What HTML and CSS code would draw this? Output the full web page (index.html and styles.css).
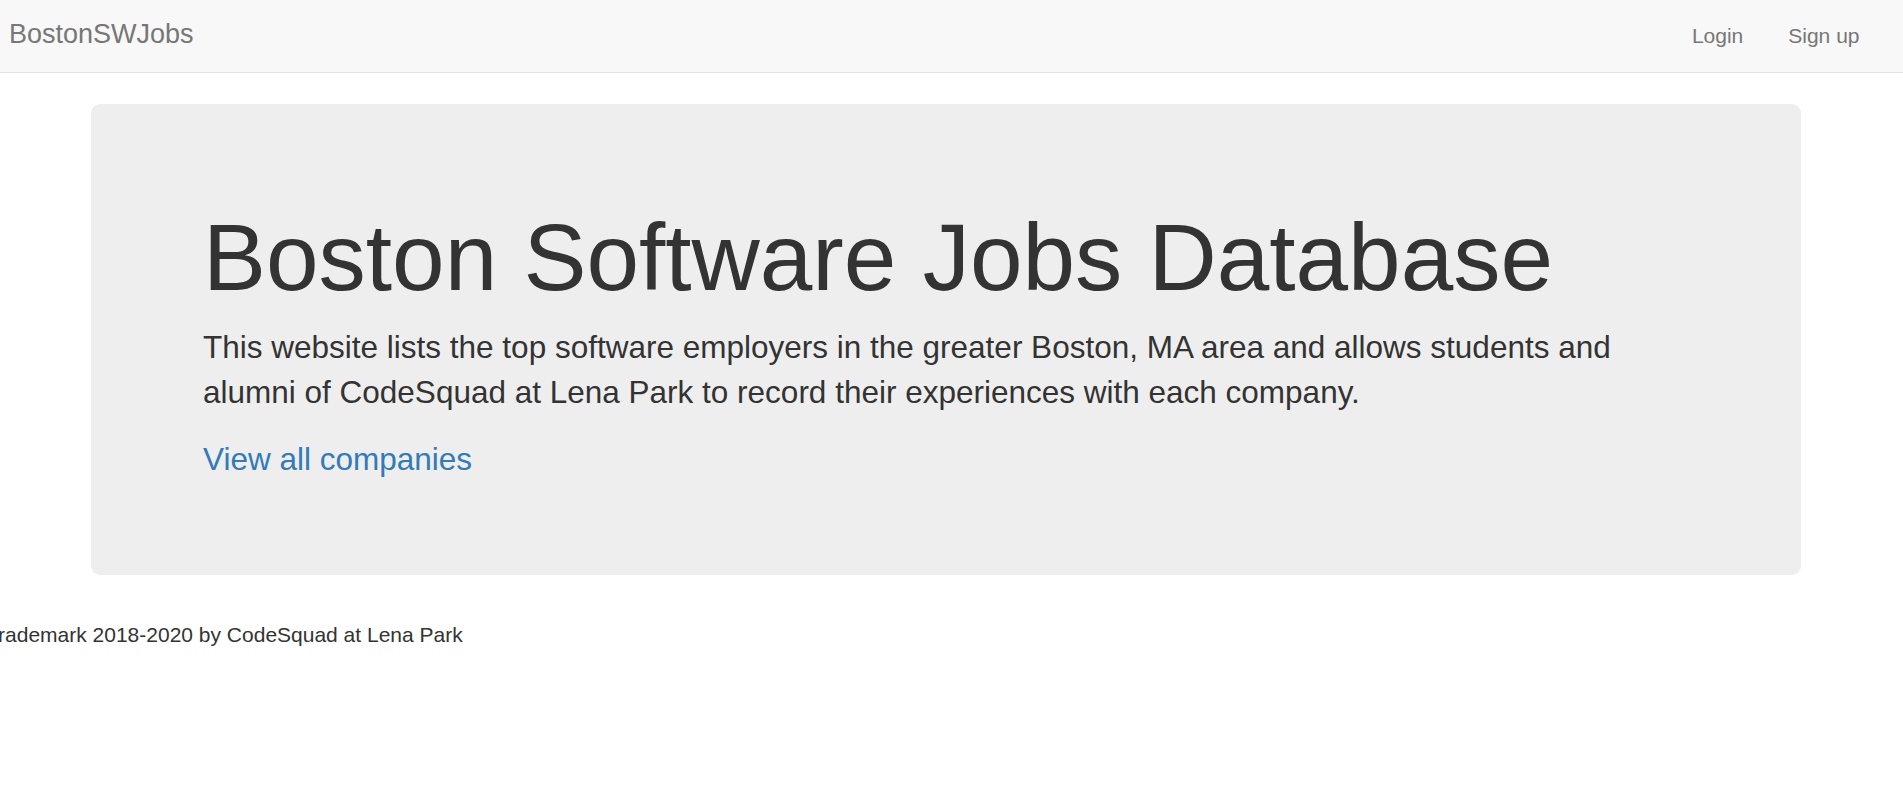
FILE: index.html
```html
<!DOCTYPE html>
<html lang="en">
<head>
<meta charset="utf-8">
<title>BostonSWJobs</title>
<link rel="stylesheet" href="styles.css">
</head>
<body>
<nav class="navbar">
  <a class="brand" href="#">BostonSWJobs</a>
  <ul class="nav-links">
    <li><a href="#">Login</a></li>
    <li><a href="#">Sign up</a></li>
  </ul>
</nav>
<main class="page">
  <section class="jumbotron">
    <h1 class="title">Boston Software Jobs Database</h1>
    <p class="lead">This website lists the top software employers in the greater Boston, MA area and allows students and alumni of CodeSquad at Lena Park to record their experiences with each company.</p>
    <p class="lead last"><a class="link" href="#">View all companies</a></p>
  </section>
</main>
<footer class="footer">
  <p class="footer-text">Trademark 2018-2020 by CodeSquad at Lena Park</p>
</footer>
</body>
</html>
```
FILE: styles.css
```css
html, body {
  margin: 0;
  padding: 0;
  background: #ffffff;
}
body {
  font-family: "Liberation Sans", Arial, Helvetica, sans-serif;
  color: #333333;
  overflow-x: hidden;
}
.navbar {
  display: flex;
  justify-content: space-between;
  align-items: flex-start;
  height: 72px;
  background: #f8f8f8;
  border-bottom: 1px solid #e5e5e5;
}
.brand {
  display: block;
  padding: 21px 0 0 9px;
  font-size: 27px;
  line-height: 27px;
  color: #777777;
  text-decoration: none;
}
.nav-links {
  display: flex;
  list-style: none;
  margin: 0 21px 0 0;
  padding: 0;
}
.nav-links a {
  display: block;
  padding: 24.5px 22.5px 0;
  font-size: 21px;
  line-height: 21px;
  color: #777777;
  text-decoration: none;
}
.page {
  padding: 31px 0 0 91px;
}
.jumbotron {
  box-sizing: border-box;
  width: 1710px;
  padding: 72px 112px 92.5px;
  background: #eeeeee;
  border-radius: 9px;
}
.title {
  margin: 30px 0 15px;
  font-size: 94.5px;
  line-height: 1.1;
  font-weight: 400;
  color: #333333;
}
.lead {
  margin: 0 0 22.5px;
  font-size: 31.5px;
  line-height: 45px;
  font-weight: 400;
}
.lead.last {
  margin-bottom: 0;
}
.link {
  color: #337ab7;
  text-decoration: none;
}
.footer {
  padding-top: 45px;
}
.footer-text {
  margin: 0 0 0 -14px;
  font-size: 21px;
  line-height: 30px;
  color: #333333;
}
```
